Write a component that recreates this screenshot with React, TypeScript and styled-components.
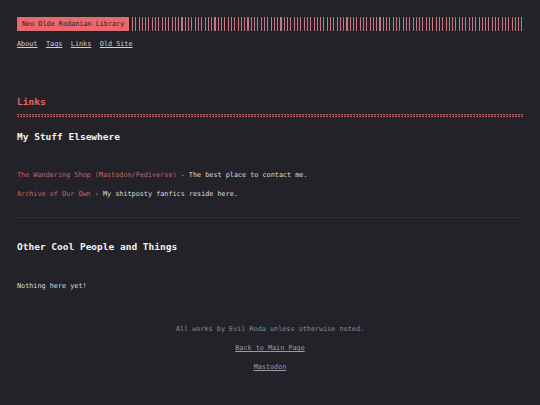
import React from "react";
import styled, { createGlobalStyle } from "styled-components";

const Global = createGlobalStyle`
  html, body { margin: 0; padding: 0; background: #232228; }
  body { font-family: "DejaVu Sans Mono", "Liberation Mono", monospace; color: #e4e4e6; }
`;

const Page = styled.div`
  padding: 17px 17px 0 17px;
  min-height: 388px;
  background: #232228;
`;

const TopBar = styled.header`
  display: flex;
  align-items: stretch;
  height: 14px;
  gap: 3px;
`;

const Brand = styled.div`
  background: #e8686e;
  color: #2b2127;
  font-size: 6.8px;
  line-height: 14px;
  padding: 0 5px;
  white-space: nowrap;
`;

const Stripes = styled.div`
  flex: 1;
  margin-right: 1px;
  background-image: repeating-linear-gradient(
    90deg,
    #c97880 0px,
    #c97880 1px,
    transparent 1px,
    transparent 3.3px
  );
`;

const Nav = styled.nav`
  display: flex;
  gap: 8.5px;
  margin-top: 8px;
  font-size: 6.8px;
  line-height: 10px;
`;

const NavLink = styled.a`
  color: #cfcfd3;
  text-decoration: underline;
`;

const PageTitle = styled.h2`
  margin: 47px 0 0 0;
  font-size: 9.5px;
  line-height: 12px;
  font-weight: bold;
  color: #e0656d;
  background-image:
    repeating-linear-gradient(90deg, #b85a66 0 2px, transparent 2px 3px),
    repeating-linear-gradient(90deg, transparent 0 1px, #7a3c48 1px 2px, transparent 2px 3px),
    repeating-linear-gradient(90deg, #b85a66 0 2px, transparent 2px 3px);
  background-size: 100% 1px, 100% 1px, 100% 1px;
  background-position: 0 calc(100% - 2px), 0 calc(100% - 1px), 0 100%;
  background-repeat: no-repeat;
  padding-bottom: 9px;
`;

const SectionTitle = styled.h3<{ $top: number }>`
  margin: ${(p) => p.$top}px 0 0 0;
  font-size: 9.5px;
  line-height: 12px;
  font-weight: bold;
  color: #f2f2f4;
`;

const Para = styled.p<{ $top: number }>`
  margin: ${(p) => p.$top}px 0 0 0;
  font-size: 6.8px;
  line-height: 10px;
  color: #dcdcdf;
`;

const ExtLink = styled.a`
  color: #c8646c;
  text-decoration: none;
`;

const Rule = styled.hr`
  margin: 18px 0 0 0;
  border: 0;
  height: 1px;
  background: #313036;
`;

const Footer = styled.footer`
  margin-top: 33px;
  display: flex;
  flex-direction: column;
  align-items: center;
  gap: 9px;
  font-size: 6.8px;
  line-height: 10px;
  color: #8b8a90;
`;

const FooterLink = styled.a`
  color: #9c9ba1;
  text-decoration: underline;
`;

export default function App() {
  return (
    <>
      <Global />
      <Page>
        <TopBar>
          <Brand>Neo Olde Rodanian Library</Brand>
          <Stripes />
        </TopBar>
        <Nav>
          <NavLink href="#">About</NavLink>
          <NavLink href="#">Tags</NavLink>
          <NavLink href="#">Links</NavLink>
          <NavLink href="#">Old Site</NavLink>
        </Nav>
        <PageTitle>Links</PageTitle>
        <SectionTitle $top={14}>My Stuff Elsewhere</SectionTitle>
        <Para $top={27}>
          <ExtLink href="#">The Wandering Shop (Mastodon/Fediverse)</ExtLink> - The best place to contact me.
        </Para>
        <Para $top={9}>
          <ExtLink href="#">Archive of Our Own</ExtLink> - My shitposty fanfics reside here.
        </Para>
        <Rule />
        <SectionTitle $top={23}>Other Cool People and Things</SectionTitle>
        <Para $top={28}>Nothing here yet!</Para>
        <Footer>
          <span>All works by Evil Roda unless otherwise noted.</span>
          <FooterLink href="#">Back to Main Page</FooterLink>
          <FooterLink href="#">Mastodon</FooterLink>
        </Footer>
      </Page>
    </>
  );
}
